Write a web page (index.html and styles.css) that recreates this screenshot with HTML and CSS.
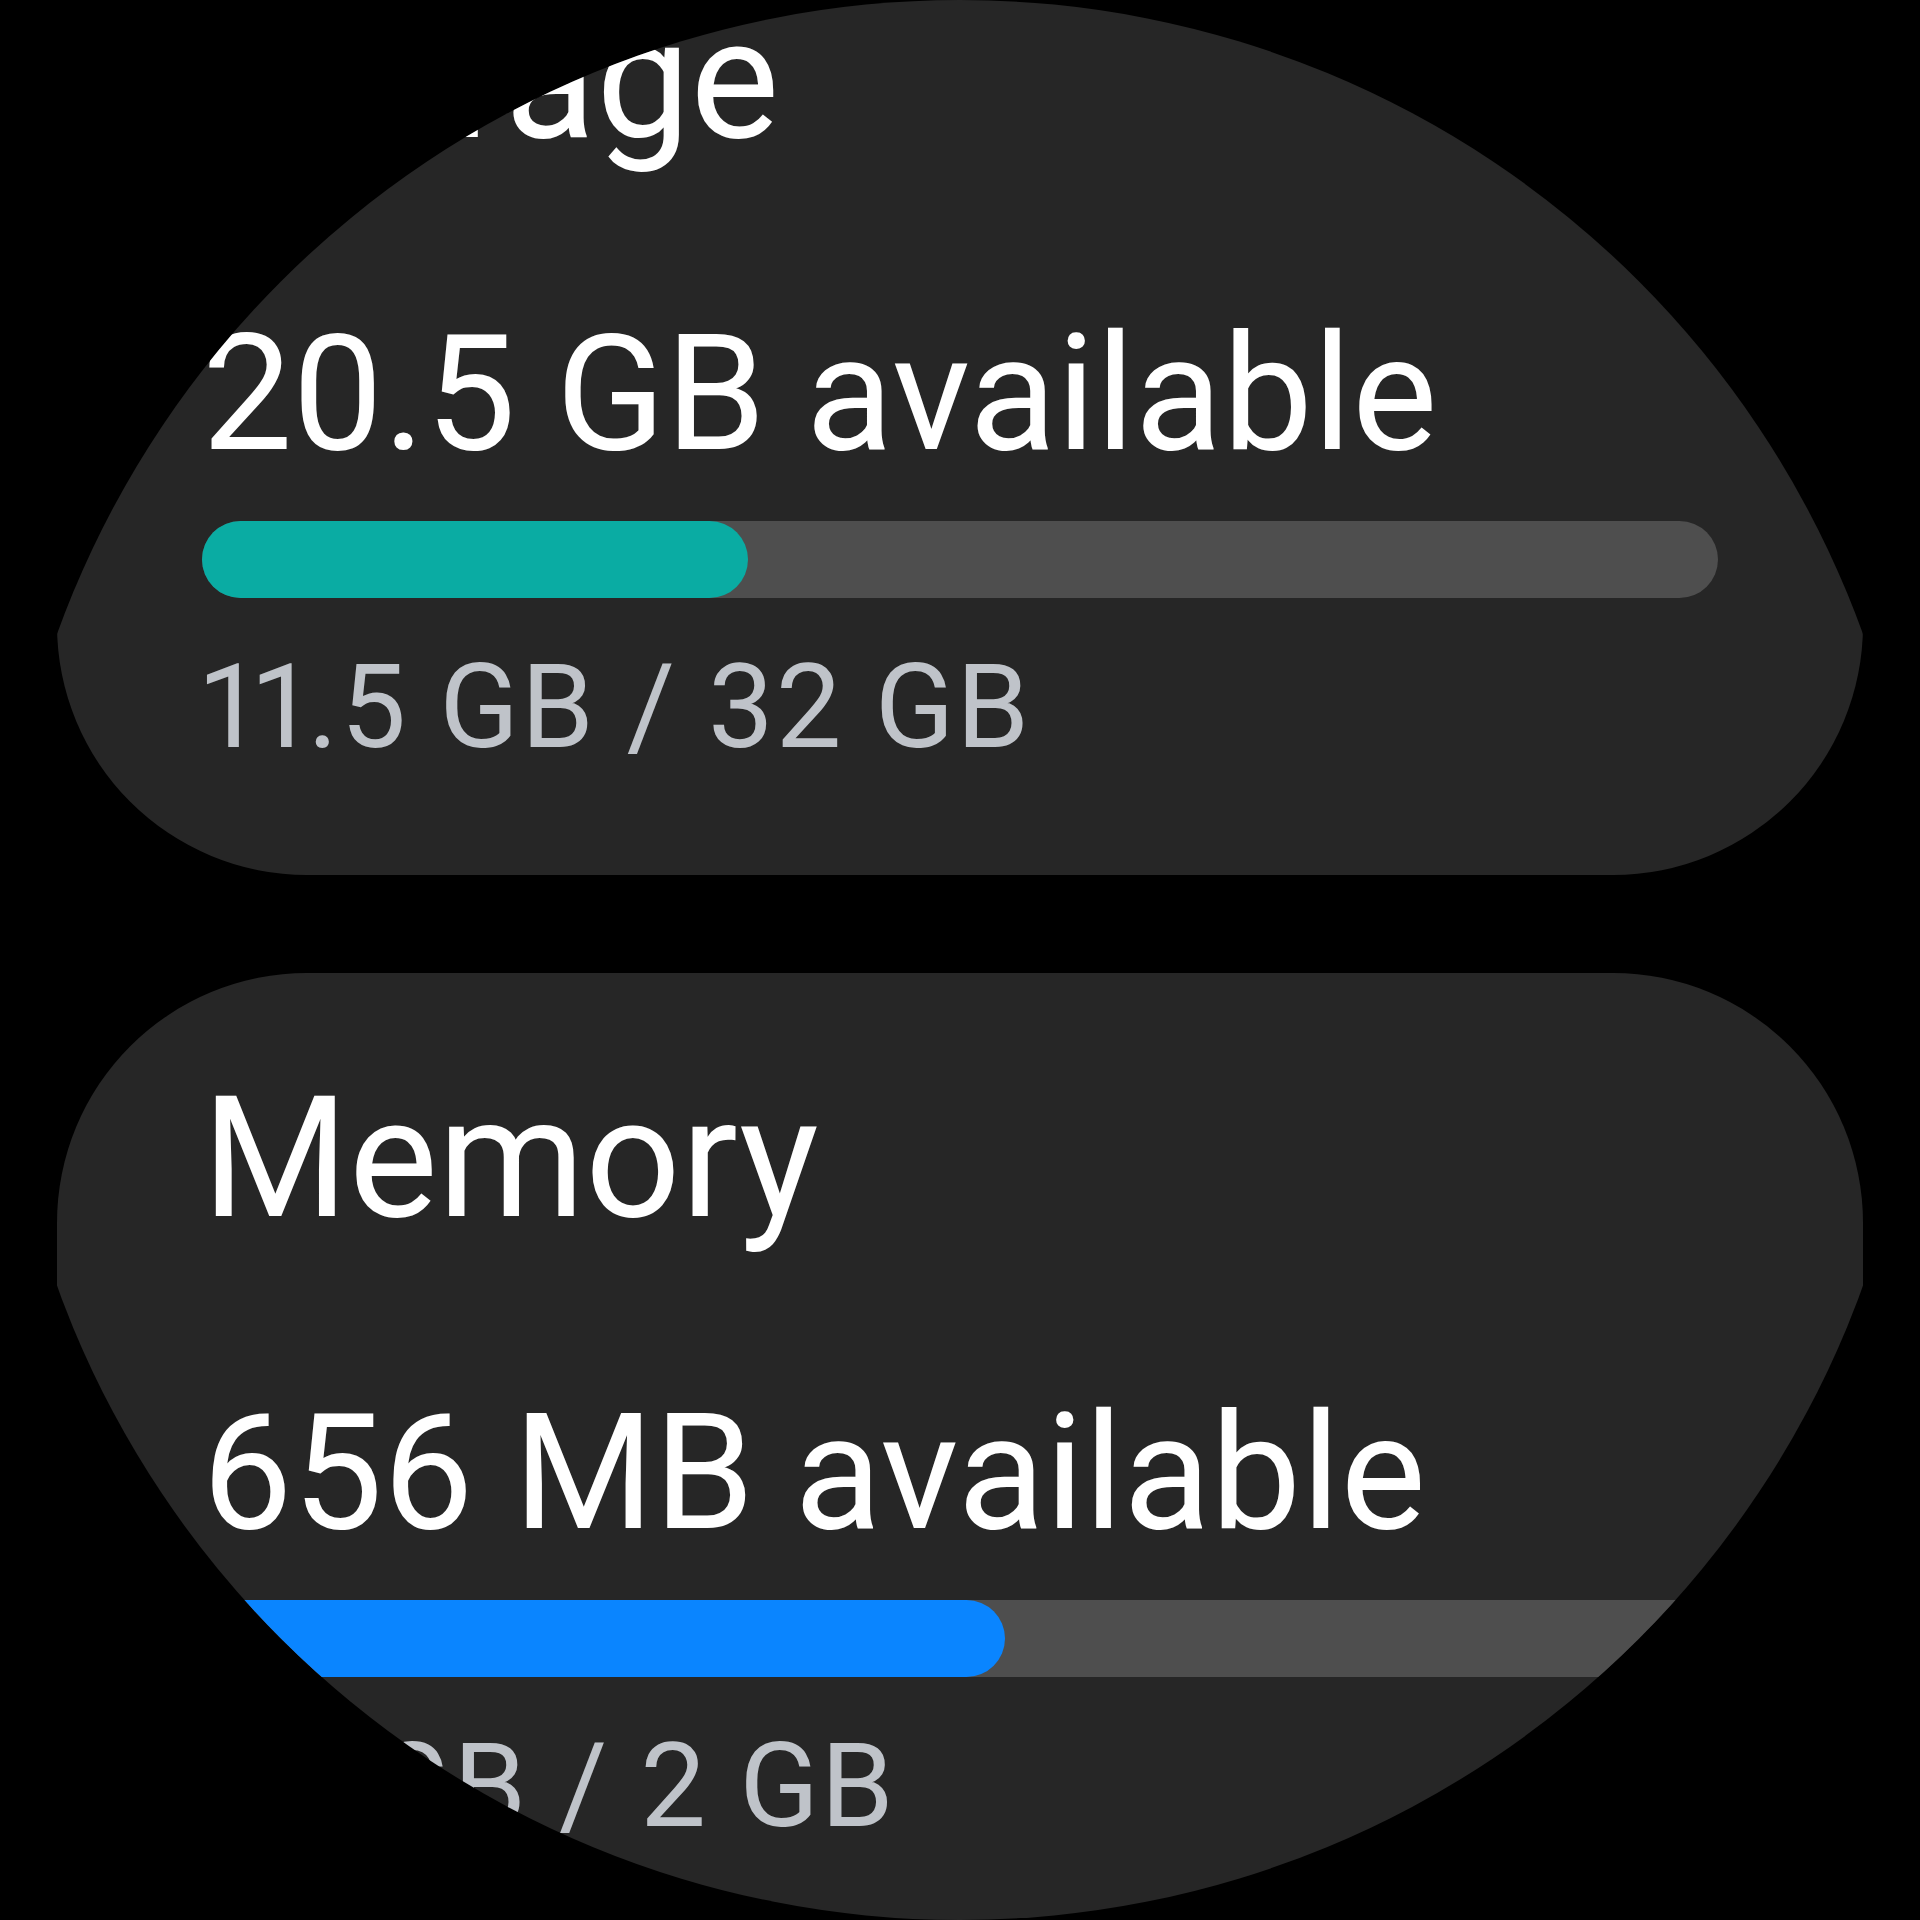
FILE: index.html
```html
<!DOCTYPE html>
<html lang="en">
<head>
<meta charset="utf-8">
<title>Storage and memory</title>
<link rel="stylesheet" href="styles.css">
</head>
<body>
<div class="watch">
  <div class="list">
    <section class="card">
      <div class="title">Storage</div>
      <div class="value">20.5 GB available</div>
      <div class="track"><div class="fill fill-storage" style="width: 36%"></div></div>
      <div class="caption">11.5 GB / 32 GB</div>
    </section>
    <section class="card">
      <div class="title">Memory</div>
      <div class="value">656 MB available</div>
      <div class="track"><div class="fill fill-memory" style="width: 53%"></div></div>
      <div class="caption">1.1 GB / 2 GB</div>
    </section>
  </div>
</div>
</body>
</html>
```

FILE: styles.css
```css
html, body {
  margin: 0;
  padding: 0;
  background: #000;
}

body {
  width: 1920px;
  height: 1920px;
  overflow: hidden;
  font-family: Roboto, "Noto Sans", "Liberation Sans", sans-serif;
}

.watch {
  width: 1920px;
  height: 1920px;
  border-radius: 50%;
  overflow: hidden;
  background: #000;
}

.list {
  display: flex;
  flex-direction: column;
  gap: 98px;
  margin-top: -106px;
  padding: 0 57px;
}

.card {
  background: #262626;
  border-radius: 250px;
  padding: 102px 145px 109px;
  display: flex;
  flex-direction: column;
}

.title {
  color: #ffffff;
  font-size: 168px;
  line-height: 1;
  white-space: nowrap;
}

.value {
  color: #ffffff;
  font-size: 161px;
  line-height: 1;
  margin-top: 150px;
  white-space: nowrap;
}

.track {
  margin-top: 46px;
  height: 77px;
  border-radius: 39px;
  background: #4e4e4e;
  display: flex;
}

.fill {
  height: 100%;
  border-radius: 39px;
}

.fill-storage {
  background: #0aaca3;
}

.fill-memory {
  background: #0a85ff;
}

.caption {
  color: #bfc3c9;
  font-size: 117px;
  line-height: 1;
  margin-top: 51px;
  letter-spacing: 2px;
  white-space: nowrap;
  font-variant-numeric: proportional-nums;
}
```
